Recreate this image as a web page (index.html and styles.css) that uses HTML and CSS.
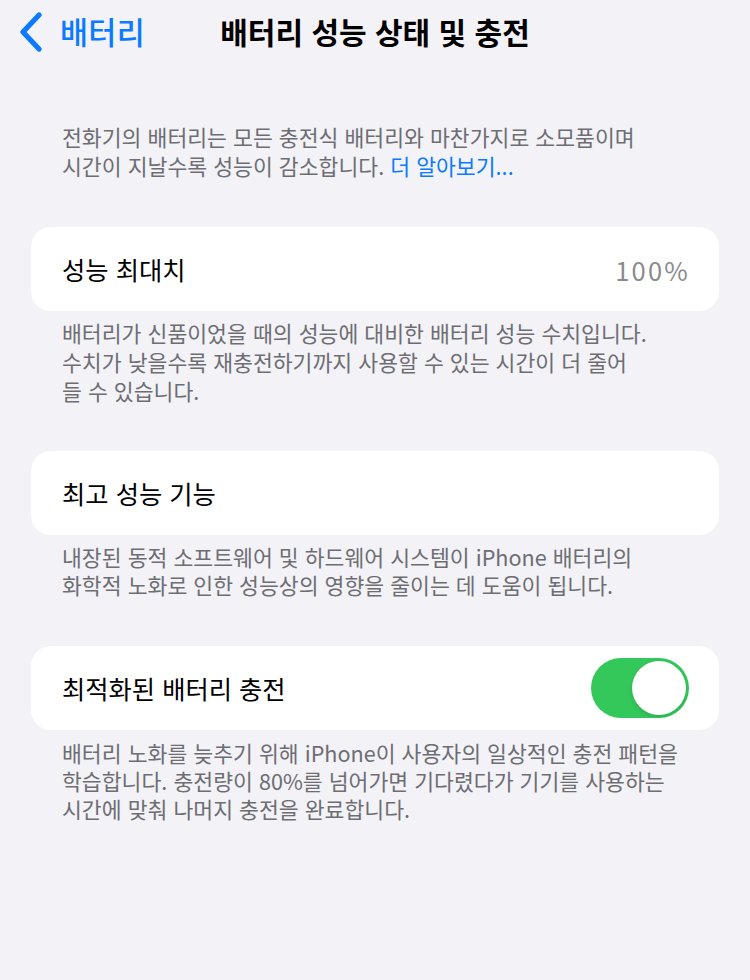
FILE: index.html
```html
<!DOCTYPE html>
<html lang="ko">
<head>
<meta charset="utf-8">
<title>배터리 성능 상태 및 충전</title>
<link rel="stylesheet" href="styles.css">
</head>
<body>
<div class="page">
  <header class="nav">
    <a class="back" href="#">
      <svg class="chev" width="26" height="40" viewBox="0 0 26 40"><path d="M21 3 L5 20 L21 37" fill="none" stroke="#0a7aff" stroke-width="5.2" stroke-linecap="round" stroke-linejoin="round"/></svg>
      <span class="back-label">배터리</span>
    </a>
    <h1 class="title">배터리 성능 상태 및 충전</h1>
    <span class="spacer"></span>
  </header>

  <p class="note intro">전화기의 배터리는 모든 충전식 배터리와 마찬가지로 소모품이며<br>시간이 지날수록 성능이 감소합니다. <a class="link" href="#">더 알아보기...</a></p>

  <section class="group">
    <div class="card">
      <span class="label">성능 최대치</span>
      <span class="value">100%</span>
    </div>
    <p class="note">배터리가 신품이었을 때의 성능에 대비한 배터리 성능 수치입니다.<br>수치가 낮을수록 재충전하기까지 사용할 수 있는 시간이 더 줄어<br>들 수 있습니다.</p>
  </section>

  <section class="group g2">
    <div class="card">
      <span class="label">최고 성능 기능</span>
    </div>
    <p class="note">내장된 동적 소프트웨어 및 하드웨어 시스템이 iPhone 배터리의<br>화학적 노화로 인한 성능상의 영향을 줄이는 데 도움이 됩니다.</p>
  </section>

  <section class="group g3">
    <div class="card">
      <span class="label">최적화된 배터리 충전</span>
      <span class="toggle"><span class="knob"></span></span>
    </div>
    <p class="note last">배터리 노화를 늦추기 위해 iPhone이 사용자의 일상적인 충전 패턴을<br>학습합니다. 충전량이 80%를 넘어가면 기다렸다가 기기를 사용하는<br>시간에 맞춰 나머지 충전을 완료합니다.</p>
  </section>
</div>
</body>
</html>
```

FILE: styles.css
```css
html, body {
  margin: 0;
  padding: 0;
  background: #f2f2f7;
}
body {
  font-family: "Noto Sans CJK KR", "Noto Sans", sans-serif;
  color: #000;
  width: 750px;
  height: 980px;
  overflow: hidden;
}
.page {
  padding: 0 31px;
}
.nav {
  display: grid;
  grid-template-columns: 1fr auto 1fr;
  align-items: center;
  height: 64px;
  margin: 0 -31px;
  padding: 0 18px;
}
.back {
  display: flex;
  align-items: center;
  gap: 16px;
  text-decoration: none;
  color: #0a7aff;
}
.chev {
  display: block;
}
.back-label {
  font-size: 30.5px;
  font-weight: 500;
  line-height: 1;
  margin-top: -2px;
  letter-spacing: 0.3px;
}
.title {
  margin: 0;
  font-size: 30px;
  font-weight: 700;
  line-height: 1;
  margin-top: -2px;
}
.note {
  margin: 0;
  padding: 0 31px;
  font-size: 21.6px;
  line-height: 28.7px;
  color: #6d6d72;
  white-space: nowrap;
}
.intro {
  margin-top: 59px;
}
.link {
  color: #0a7aff;
  text-decoration: none;
}
.group {
  margin-top: 47px;
}
.group.g2 {
  margin-top: 45px;
}
.group.g3 {
  margin-top: 46px;
}
.card {
  display: flex;
  align-items: center;
  justify-content: space-between;
  height: 84px;
  padding: 0 31px;
  background: #fff;
  border-radius: 20px;
  box-sizing: border-box;
}
.card + .note {
  margin-top: 8px;
}
.card + .note.last {
  margin-top: 9px;
  line-height: 28px;
}
.label {
  font-size: 25.3px;
  font-weight: 400;
}
.value {
  font-size: 25.5px;
  color: #8a8a8e;
  letter-spacing: 2.2px;
  margin-right: -2px;
}
.toggle {
  position: relative;
  width: 98px;
  height: 60px;
  border-radius: 30px;
  background: #34c759;
  margin-right: -1px;
}
.knob {
  position: absolute;
  right: 3px;
  top: 3px;
  width: 54px;
  height: 54px;
  border-radius: 50%;
  background: #fff;
  box-shadow: 0 2px 4px rgba(0,0,0,0.12);
}
```
